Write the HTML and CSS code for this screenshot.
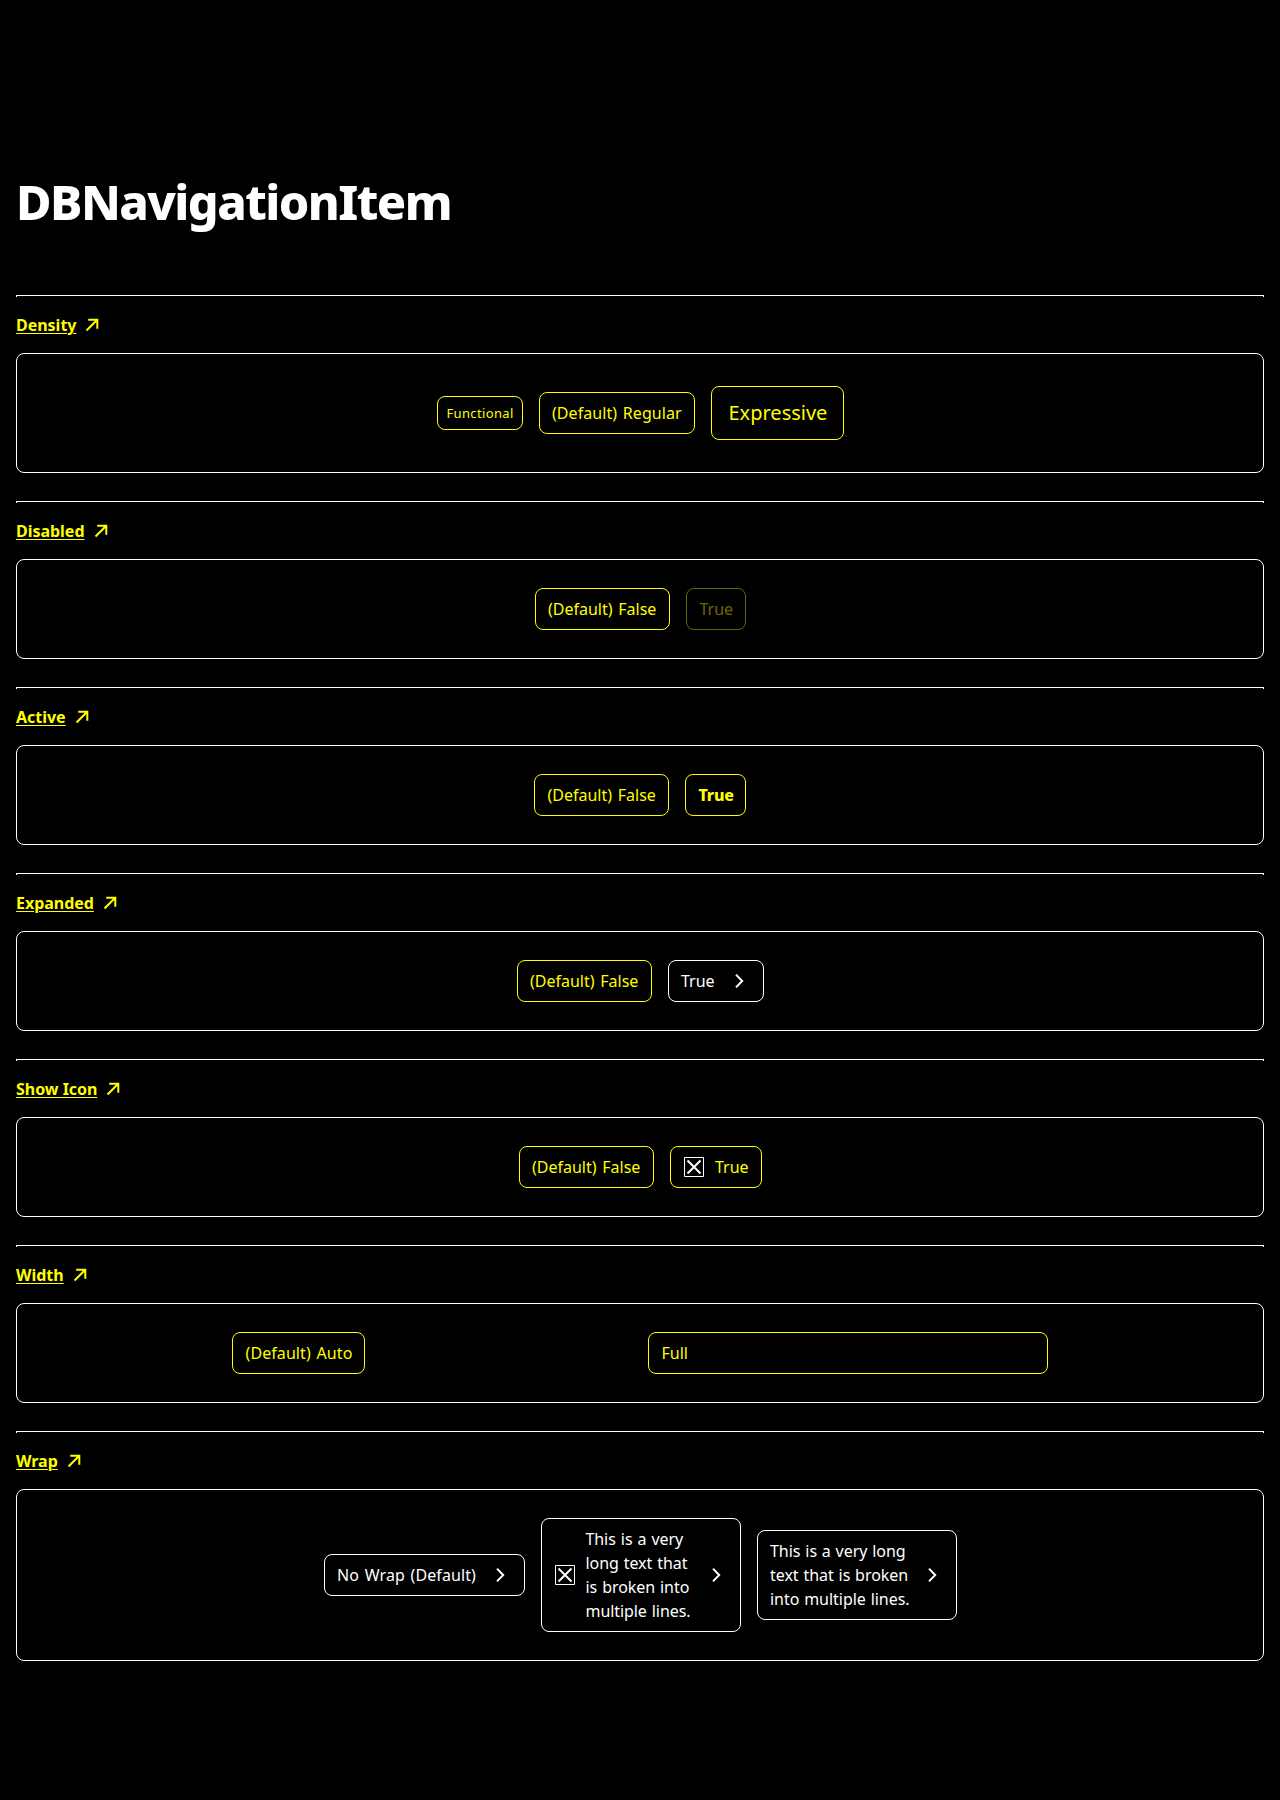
FILE: index.html
```html
<!DOCTYPE html>
<html lang="en">
<head>
<meta charset="utf-8">
<title>DBNavigationItem</title>
<link rel="stylesheet" href="styles.css">
</head>
<body>
<svg class="sprite" aria-hidden="true">
  <symbol id="arrow" viewBox="0 0 20 20"><path d="M4.5 15.5 15 5M6.2 4.7H15.3V13.8"/></symbol>
  <symbol id="chevron" viewBox="0 0 20 20"><path d="M7 3.6 13.2 10 7 16.4"/></symbol>
  <symbol id="box" viewBox="0 0 20 20"><path class="frame" d="M.5.5h19v19H.5z"/><path d="M3.5 3.5 16.5 16.5M16.5 3.5 3.5 16.5"/></symbol>
</svg>
<main class="page">
  <h1 class="title">DBNavigationItem</h1>

  <section class="group">
    <h2 class="heading"><a class="link" href="#">Density</a><svg class="icon arrow"><use href="#arrow"/></svg></h2>
    <div class="panel tall">
      <a class="item functional">Functional</a>
      <a class="item w-regular">(Default) Regular</a>
      <a class="item expressive">Expressive</a>
    </div>
  </section>

  <section class="group">
    <h2 class="heading"><a class="link" href="#">Disabled</a><svg class="icon arrow"><use href="#arrow"/></svg></h2>
    <div class="panel">
      <a class="item w-false">(Default) False</a>
      <a class="item w-true disabled">True</a>
    </div>
  </section>

  <section class="group">
    <h2 class="heading"><a class="link" href="#">Active</a><svg class="icon arrow"><use href="#arrow"/></svg></h2>
    <div class="panel">
      <a class="item w-false">(Default) False</a>
      <a class="item w-active active">True</a>
    </div>
  </section>

  <section class="group">
    <h2 class="heading"><a class="link" href="#">Expanded</a><svg class="icon arrow"><use href="#arrow"/></svg></h2>
    <div class="panel">
      <a class="item w-false">(Default) False</a>
      <button class="item w-expand parent"><span>True</span><svg class="icon chevron"><use href="#chevron"/></svg></button>
    </div>
  </section>

  <section class="group">
    <h2 class="heading"><a class="link" href="#">Show Icon</a><svg class="icon arrow"><use href="#arrow"/></svg></h2>
    <div class="panel">
      <a class="item w-false">(Default) False</a>
      <a class="item w-icon"><svg class="icon box"><use href="#box"/></svg><span>True</span></a>
    </div>
  </section>

  <section class="group">
    <h2 class="heading"><a class="link" href="#">Width</a><svg class="icon arrow"><use href="#arrow"/></svg></h2>
    <div class="panel">
      <div class="cell"><a class="item w-auto">(Default) Auto</a></div>
      <div class="cell"><a class="item w-full">Full</a></div>
    </div>
  </section>

  <section class="group">
    <h2 class="heading"><a class="link" href="#">Wrap</a><svg class="icon arrow"><use href="#arrow"/></svg></h2>
    <div class="panel wrapped">
      <button class="item parent w-nowrap"><span>No Wrap (Default)</span><svg class="icon chevron"><use href="#chevron"/></svg></button>
      <button class="item parent w-wrap"><svg class="icon box"><use href="#box"/></svg><span class="label">This is a very<br>long text that<br>is broken into<br>multiple lines.</span><svg class="icon chevron"><use href="#chevron"/></svg></button>
      <button class="item parent w-wrap"><span>This is a very long<br>text that is broken<br>into multiple lines.</span><svg class="icon chevron"><use href="#chevron"/></svg></button>
    </div>
  </section>
</main>
</body>
</html>
```

FILE: styles.css
```css
* { box-sizing: border-box; }
body {
  margin: 0;
  min-height: 1800px;
  background: #000;
  color: #fff;
  font: 16px/24px "Noto Sans", sans-serif;
}
.sprite { display: none; }
.page { padding: 169px 16px 0; }
.title {
  margin: 0 0 62px;
  height: 64px;
  font: 800 48.5px/64px "Noto Sans", sans-serif;
  letter-spacing: -1.55px;
}
.group {
  border: 1px solid #fff;
  border-bottom: 0;
  border-image: linear-gradient(#fff 2px, transparent 2px) 1;
  margin-bottom: 28px;
}
.heading {
  display: flex;
  align-items: center;
  gap: 6px;
  margin: 17px -1px 16px;
  height: 24px;
  font-size: 16px;
  line-height: 24px;
  color: #ff0;
}
.link {
  color: #ff0;
  letter-spacing: -.02px;
  text-decoration: underline;
  text-decoration-thickness: 1px;
  text-underline-offset: 2px;
  white-space: nowrap;
}
.icon {
  flex: none;
  width: 20px;
  height: 20px;
  fill: none;
  stroke: currentColor;
  stroke-width: 2;
}
.frame { stroke-width: 1; }
.box { color: #fff; }
.panel {
  display: flex;
  align-items: center;
  justify-content: center;
  gap: 16px;
  height: 100px;
  margin: 0 -1px;
  border: 1px solid #fff;
  border-radius: 8px;
}
.tall { height: 120px; }
.wrapped { height: 172px; }
.item {
  display: flex;
  align-items: center;
  flex: none;
  min-height: 42px;
  padding: 8px 11px 8px 12.5px;
  border: 1px solid #ff0;
  border-radius: 8px;
  background: none;
  color: #ff0;
  font: inherit;
  text-align: left;
  white-space: nowrap;
  word-spacing: 1.5px;
}
.functional { width: 86px; min-height: 34px; padding: 4px 8px 4px 9px; font-size: 13px; letter-spacing: .35px; }
.expressive { width: 133px; min-height: 54px; padding: 8px 16px 8px 17px; font-size: 20px; }
.parent { justify-content: space-between; padding-right: 14px; border-color: #fff; color: #fff; }
.disabled { opacity: .4; }
.active { font-weight: 800; letter-spacing: -.2px; }
.w-regular { width: 156px; letter-spacing: .06px; }
.w-false { width: 135px; }
.w-true { width: 60px; padding-left: 13px; }
.w-active { width: 61px; }
.w-expand { width: 96px; }
.w-icon { width: 92px; gap: 11.5px; padding-left: 13px; }
.w-auto { width: 133px; letter-spacing: .08px; }
.w-full { width: 400px; }
.w-nowrap { width: 201px; letter-spacing: .08px; }
.w-wrap { width: 200px; word-spacing: .7px; letter-spacing: -.03px; }
.w-wrap:has(.box) { padding-left: 13px; word-spacing: 1px; }
.label { margin: 0 auto 0 11px; letter-spacing: -.08px; }
.cell { display: flex; justify-content: center; width: 400px; }
.cell:first-child { justify-content: flex-start; }
```
